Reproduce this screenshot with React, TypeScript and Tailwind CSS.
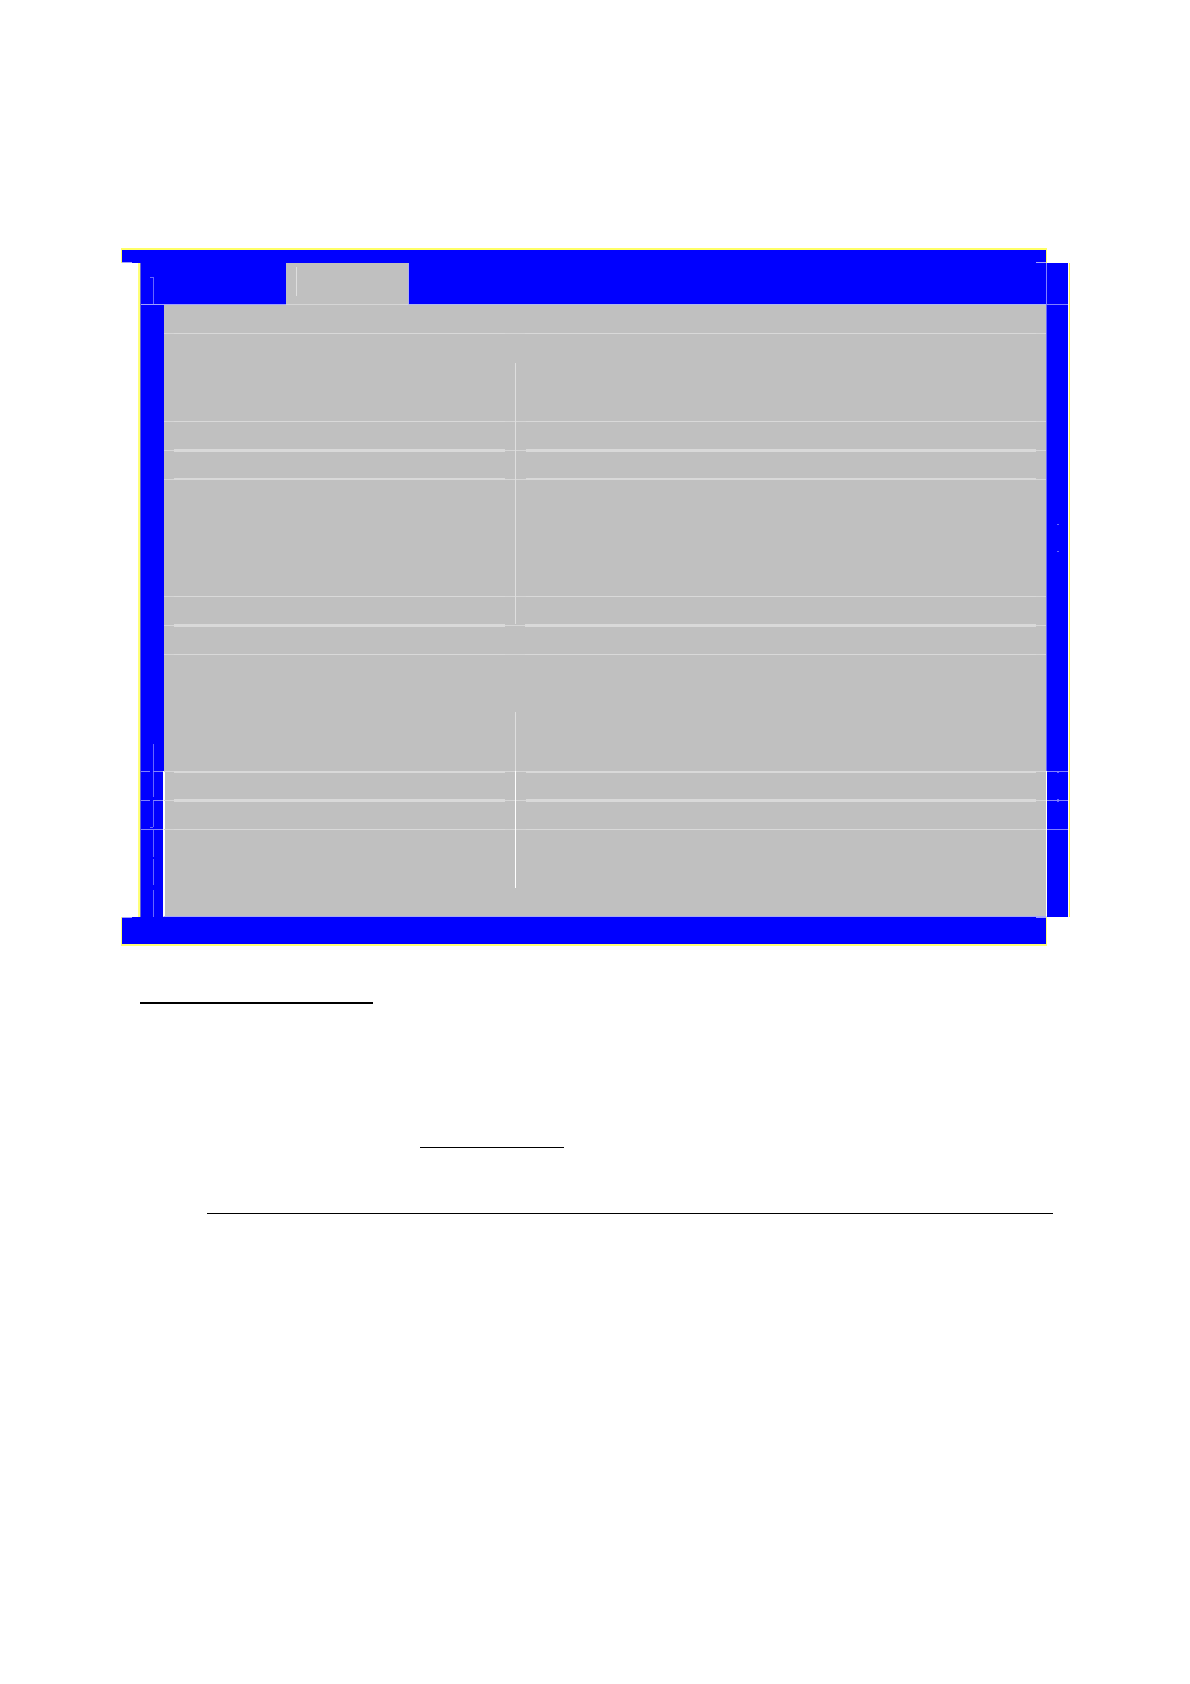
import clsx from "clsx";

type Divider = "none" | "soft" | "bright";

interface BandProps {
  height: string;
  divider?: Divider;
}

interface RuleProps {
  weight?: "thin" | "double" | "thick";
  align?: string;
  divider?: Divider;
}

const dividerClass: Record<Divider, string> = {
  none: "",
  soft: "border-l border-[#dedede]",
  bright: "border-l border-white",
};

// Empty strip of the form, optionally split into a label and a value column
function Band({ height, divider = "none" }: BandProps) {
  return (
    <div className={clsx("grid grid-cols-[351fr_531fr]", height)}>
      <div />
      <div className={dividerClass[divider]} />
    </div>
  );
}

function RuleCell({ weight, align, className }: { weight: string; align: string; className?: string }) {
  return (
    <div className={clsx("flex", align, className)}>
      <div className="h-px w-2.5 bg-[#d6d6d6]" />
      <div
        className={clsx(
          "flex-1 bg-[#d9d9d9]",
          weight === "thick" && "h-[3px]",
          weight === "double" && "h-0.5",
          weight === "thin" && "h-px"
        )}
      />
      <div className="h-px w-2.5 bg-[#d6d6d6]" />
    </div>
  );
}

function Rule({ weight = "thin", align = "items-center", divider = "none" }: RuleProps) {
  return (
    <div className="grid grid-cols-[351fr_531fr]">
      <RuleCell weight={weight} align={align} />
      <RuleCell weight={weight} align={align} className={dividerClass[divider]} />
    </div>
  );
}

// Vertical hairline inside the left frame
function Tick({ height }: { height: string }) {
  return <div className={clsx("ml-3 w-px bg-[#6666ff]", height)} />;
}

function GutterRule() {
  return (
    <div className="flex h-px justify-between">
      <div className="w-[9px] bg-[#8080ff]" />
      <div className="w-2.5 bg-[#8080ff]" />
    </div>
  );
}

function Header() {
  return (
    <div className="flex h-[42px] border-l border-[#6666cc] bg-[#0000ff]">
      <div className="flex w-[145px] flex-col border-b border-[#a0a0ff]">
        <div className="mt-3.5 ml-[9px] h-px w-1 bg-[#6666ff]" />
        <Tick height="h-[26px]" />
      </div>
      <div className="w-[123px] border-r border-b border-r-[#b0b0f0] border-b-[#d6d6d6] bg-[#c0c0c0]">
        <div className="mt-1 ml-2.5 h-[29px] w-px bg-[#dedede]" />
      </div>
      <div className="flex-1 border-b border-[#b0b8f0]" />
      <div className="w-[22px] border-b border-l border-[#8080ff]" />
    </div>
  );
}

function UpperForm() {
  return (
    <div className="flex">
      <div className="flex w-6 flex-col justify-end border-l border-[#6666cc] bg-[#0000ff]">
        <Tick height="h-[27px]" />
      </div>
      <div className="flex-1 bg-[#c0c0c0]">
        <Band height="h-7" />
        <Rule />
        <Band height="h-[29px]" />
        <Band height="h-[58px]" divider="soft" />
        <Rule divider="soft" />
        <Band height="h-[27px]" divider="soft" />
        <Rule weight="thick" divider="soft" />
        <Band height="h-[26px]" divider="soft" />
        <Rule weight="double" align="items-end" divider="soft" />
        <Band height="h-[116px]" divider="soft" />
        <Rule divider="soft" />
        <Band height="h-[27px]" divider="soft" />
        <Rule weight="thick" />
        <Band height="h-[27px]" />
        <Rule />
        <Band height="h-[57px]" />
        <Band height="h-[59px]" divider="soft" />
      </div>
      <div className="flex w-[22px] flex-col items-center border-l border-[#6666ff] bg-[#0000ff] pt-[219px]">
        <div className="h-px w-0.5 bg-[#6666ff]" />
        <div className="mt-[26px] h-px w-0.5 bg-[#6666ff]" />
      </div>
    </div>
  );
}

function LowerForm() {
  return (
    <div className="flex">
      <div className="w-[23px] border-l border-[#6666cc] bg-[#0000ff]">
        <GutterRule />
        <Tick height="h-[25px]" />
        <div className="h-[3px]" />
        <GutterRule />
        <Tick height="h-[26px]" />
        <div className="ml-[9px] h-px w-[3px] bg-[#6666ff]" />
        <div className="h-px" />
        <div className="h-px bg-[#8080ff]" />
        <Tick height="h-[27px]" />
        <div className="h-0.5" />
        <Tick height="h-[26px]" />
        <div className="h-[5px]" />
        <Tick height="h-[27px]" />
      </div>
      <div className="flex-1 border-x border-b border-x-white border-b-[#a8a8f8] bg-[#c0c0c0] shadow-[inset_1px_0_0_white]">
        <Rule weight="double" align="items-start" divider="bright" />
        <Band height="h-[26px]" divider="bright" />
        <Rule weight="thick" divider="bright" />
        <Band height="h-[27px]" divider="bright" />
        <Rule divider="bright" />
        <Band height="h-[58px]" divider="bright" />
        <Band height="h-7" />
      </div>
      <div className="flex w-[21px] flex-col items-center bg-[#0000ff]">
        <div className="h-px w-full bg-[#8080ff]" />
        <div className="h-px w-0.5 bg-[#6666ff]" />
        <div className="mt-[26px] h-px w-0.5 bg-[#6666ff]" />
        <div className="h-px w-full bg-[#8080ff]" />
        <div className="h-px w-0.5 bg-[#6666ff]" />
        <div className="mt-[27px] h-px w-full bg-[#8080ff]" />
      </div>
    </div>
  );
}

export default function App() {
  return (
    <main className="min-h-screen bg-white pt-[248px] pr-[120px] pl-[121px]">
      <section>
        <div className="mr-[23px] flex h-[15px] items-end justify-between border-x border-t-2 border-[#ffff66] bg-[#0000ff]">
          <div className="h-px w-2.5 bg-[#a0a0ff]" />
          <div className="h-px w-2.5 bg-[#a0a0ff]" />
        </div>
        <div className="ml-[17px] border-r border-l-2 border-r-[#ffee44] border-l-[#ffff77] pr-px">
          <Header />
          <UpperForm />
          <LowerForm />
        </div>
        <div className="mr-[23px] flex h-[29px] items-start justify-between border-x border-b-2 border-[#ffff77] bg-[#0000ff]">
          <div className="h-px w-2.5 bg-[#a0a0ff]" />
          <div className="h-px w-2.5 bg-[#a0a0ff]" />
        </div>
      </section>

      {/* Underlines below the form */}
      <section className="pt-14 pr-[17px] pl-[19px]">
        <hr className="w-[233px] border-t-2 border-black" />
        <hr className="mt-[143px] ml-[280px] w-36 border-t border-black" />
        <hr className="mt-[65px] ml-[67px] border-t border-black" />
      </section>
    </main>
  );
}
